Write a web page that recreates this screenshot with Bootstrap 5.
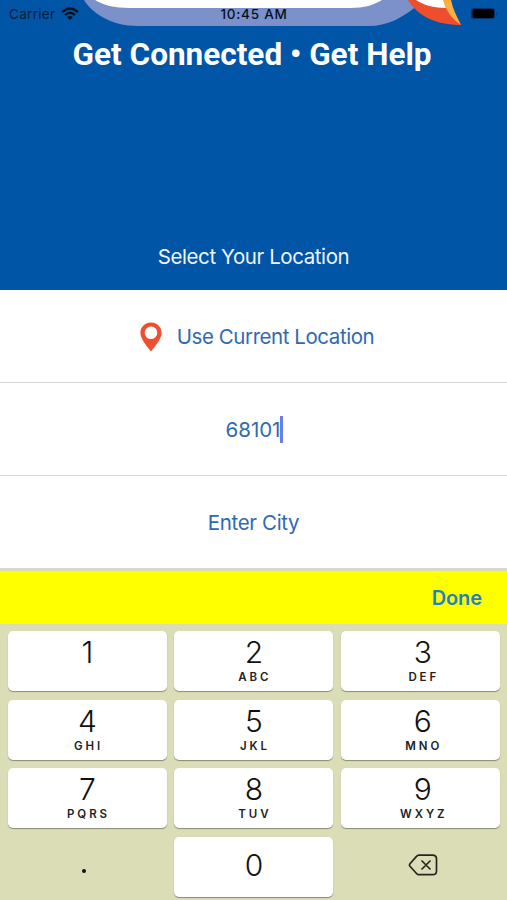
<!DOCTYPE html>
<html lang="en">
<head>
<meta charset="utf-8">
<meta name="viewport" content="width=device-width, initial-scale=1">
<title>Get Connected • Get Help</title>
<link href="https://cdn.jsdelivr.net/npm/bootstrap@5.3.0/dist/css/bootstrap.min.css" rel="stylesheet">
<style>
body{font-family:Inter,"Liberation Sans",sans-serif;width:507px;height:900px;background:#fff}
.hero{height:290px;background:#0055a6;color:#fff}
.hero-art{left:0;top:0}
.status{height:28px;font-size:13.500px;line-height:28px;color:#07101f;padding:0 8px 0 9px;font-weight:500}
.carrier{letter-spacing:.3px;font-weight:400;color:#061c3c}
.wifi{margin-left:6px}
.clock{letter-spacing:.75px}
.headline{font:700 31.500px/38px Roboto,sans-serif;margin:8px 0 0;padding-right:3px;letter-spacing:.01px}
.prompt{font-size:20.500px;line-height:26px;letter-spacing:-.42px;margin-bottom:20px;color:#eef4ff}
.choice{height:93px;border-bottom:1px solid #d6d6d8;color:#3069b3;font-size:20.500px;line-height:26px;padding-top:2px}
.use-current{letter-spacing:-.44px;margin-left:15px}
.pin{margin-left:7px}
.zip{letter-spacing:-.05px;margin-left:2px}
.city{letter-spacing:-.36px}
.caret{width:3px;height:27px;background:#6a7fe6;margin-top:-2px}
.toolbar{height:55px;background:#ff0;border-top:2px solid #dcdba0;padding-right:25px}
.done{color:#1f83c0;font-size:20px;line-height:26px;font-weight:600;letter-spacing:-.1px}
.keypad{height:276px;background:#dbddb6;padding:7px 7px 0 8px;display:grid;grid-template-columns:repeat(3,159px);grid-auto-rows:60px;column-gap:7.400px;row-gap:8.500px}
.key{background:#fff;border-radius:5px;box-shadow:0 1px 1px #888a78;color:#111;padding-top:3px}
.key-end{padding-left:5px}
.digit{font-size:30px;line-height:36px;font-weight:350}
.letters{font-size:11.500px;line-height:13px;font-weight:600;letter-spacing:2.900px;padding-left:2px;padding-top:1px;color:#222}
</style>
<script src="https://cdn.jsdelivr.net/npm/bootstrap@5.3.0/dist/js/bootstrap.bundle.min.js"></script>
</head>
<body class="overflow-hidden">
<header class="hero position-relative d-flex flex-column">
  <svg class="hero-art position-absolute" width="507" height="30" viewBox="0 0 507 30">
    <path d="M84 0C91 12 110 26 138 26H368C388 26 402 18 418 5L421 0Z" fill="#7c90ca"/>
    <path d="M95 0C103 5 114 8 130 8H350C364 8 374 5 382 0Z" fill="#fff"/>
    <path d="M408 0C418 16 435 25 461 25L449 0Z" fill="#ee4d2e"/>
    <path d="M416 0C423 5 434 8 446 8L444 0Z" fill="#fff"/>
    <path d="M443 0C445 9 451 18 461 25C456 16 453 9 451 0Z" fill="#fbb040"/>
  </svg>
  <div class="status row g-0 position-relative">
    <div class="col d-flex align-items-center"><span class="carrier">Carrier</span>
      <svg class="wifi" width="18" height="14" viewBox="0 0 18 14" fill="none" stroke="#06101e"><path d="M1.2 5Q9-2 16.8 5" stroke-width="2.4"/><path d="M4 8Q9 3.6 14 8" stroke-width="2.3"/><path d="M6.2 10.2Q9 8 11.8 10.2L9 13Z" fill="#06101e" stroke="none"/></svg>
    </div>
    <div class="col-auto clock">10:45 AM</div>
    <div class="col d-flex justify-content-end align-items-center">
      <svg width="30" height="14" viewBox="0 0 30 14"><rect x="2" y="1" width="24" height="11" rx="3" fill="#06336a"/><rect x="3.5" y="2.1" width="21.5" height="8.800" rx="2" fill="#000"/><path d="M27.5 5V9Q29.5 7 27.5 5" fill="#06336a"/></svg>
    </div>
  </div>
  <h1 class="headline text-center">Get Connected • Get Help</h1>
  <div class="prompt text-center mt-auto">Select Your Location</div>
</header>
<main>
  <div class="choice d-flex justify-content-center align-items-center">
    <svg class="pin" width="22" height="30" viewBox="0 0 22 30"><path fill="#f04e30" fill-rule="evenodd" d="M11 .5C5 .5.4 5 .4 11C.4 16.500 6 23 11 29.500C16 23 21.600 16.500 21.600 11C21.600 5 17 .5 11 .5ZM11 4.500A6.300 6.300 0 1 1 11 17.100A6.300 6.300 0 1 1 11 4.500Z"/></svg>
    <span class="use-current">Use Current Location</span>
  </div>
  <div class="choice d-flex justify-content-center align-items-center"><span class="zip">68101</span><span class="caret"></span></div>
  <div class="choice d-flex justify-content-center align-items-center"><span class="city">Enter City</span></div>
</main>
<div class="toolbar d-flex justify-content-end align-items-center"><span class="done">Done</span></div>
<div class="keypad">
  <div class="key text-center"><div class="digit">1</div></div>
  <div class="key text-center"><div class="digit">2</div><div class="letters">ABC</div></div>
  <div class="key key-end text-center"><div class="digit">3</div><div class="letters">DEF</div></div>
  <div class="key text-center"><div class="digit">4</div><div class="letters">GHI</div></div>
  <div class="key text-center"><div class="digit">5</div><div class="letters">JKL</div></div>
  <div class="key key-end text-center"><div class="digit">6</div><div class="letters">MNO</div></div>
  <div class="key text-center"><div class="digit">7</div><div class="letters">PQRS</div></div>
  <div class="key text-center"><div class="digit">8</div><div class="letters">TUV</div></div>
  <div class="key key-end text-center"><div class="digit">9</div><div class="letters">WXYZ</div></div>
  <div class="d-flex justify-content-center align-items-center pe-2 pt-2"><svg width="6" height="6"><circle cx="3" cy="3" r="2" fill="#111"/></svg></div>
  <div class="key text-center pt-0 pb-1 d-flex align-items-center justify-content-center"><div class="digit">0</div></div>
  <div class="key-end d-flex justify-content-center align-items-center pb-1"><svg width="30" height="22" viewBox="0 0 30 22" fill="none" stroke="#25261f" stroke-width="1.700" stroke-linejoin="round" stroke-linecap="round"><path d="M11 1.200H24.500Q28.500 1.200 28.500 5V17Q28.500 20.700 24.500 20.700H11Q9.500 20.700 8.500 19.500L2 12.300Q1 11 2 9.700L8.500 2.400Q9.500 1.200 11 1.200ZM14 7L22 15M22 7L14 15"/></svg></div>
</div>
</body>
</html>
